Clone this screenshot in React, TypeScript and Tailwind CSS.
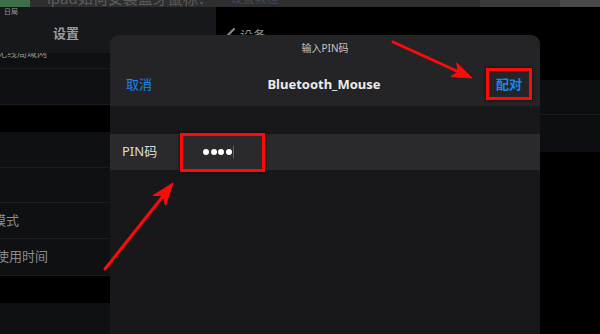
import React from 'react';

const font = { fontFamily: '"Noto Sans", "Noto Sans CJK SC", sans-serif' };

const SideRow = ({ h, label, shift }: { h: string; label?: string; shift?: string }) => (
  <div className={`${h} flex items-center border-b border-[#1b1c20] bg-[#0e1014] overflow-hidden`}>
    {label && <span className={`${shift} whitespace-nowrap text-[13px] text-[#8c8c8c]`}>{label}</span>}
  </div>
);

const Arrows = () => (
  <svg className="pointer-events-none absolute left-0 top-0" width="600" height="334" viewBox="0 0 600 334">
    <g fill="#ff0a0a" stroke="#ff0a0a" strokeLinejoin="round">
      <line x1="393" y1="42" x2="459" y2="72" strokeWidth="3" strokeLinecap="round" />
      <polygon points="472,78 451,76.5 458.3,71.8 456.7,63" strokeWidth="1" />
      <line x1="105" y1="269" x2="164" y2="195" strokeWidth="3" strokeLinecap="round" />
      <polygon points="173,183 165.6,205.4 163.1,195.6 153.2,195.4" strokeWidth="1" />
    </g>
  </svg>
);

export default function App() {
  return (
    <div className="relative flex h-[334px] w-[600px] flex-col overflow-hidden bg-black" style={font}>
      {/* page header strip, mostly cut off */}
      <div className="flex h-[7px] overflow-hidden bg-[#2e2e2e]">
        <div className="w-[30px] bg-[#3d6e48]" />
        <span className="ml-[17px] mt-[-9px] whitespace-nowrap text-[15px] leading-[15px] text-[#5c5c5c]">ipad如何安装蓝牙鼠标：</span>
        <span className="ml-[18px] mt-[-9px] whitespace-nowrap text-[12px] leading-[15px] text-[#3c4a5a]">设置教程</span>
        <div className="flex-1" />
        <div className="w-[80px] bg-[#3a3a3a]" />
        <div className="w-[40px] bg-[#4a4a4a]" />
      </div>

      <div className="flex flex-1">
        {/* settings sidebar */}
        <div className="flex w-[216px] flex-col">
          <div className="relative h-[46px] bg-[#17181c]">
            <span className="absolute left-[4px] top-[1px] text-[7px] leading-[8px] text-[#9a9a9a]">日局</span>
            <div className="pl-[53px] pt-[18px] text-[13px] font-semibold leading-[16px] text-[#9c9c9c]">设置</div>
          </div>
          <div className="flex h-[16px] items-start justify-between overflow-hidden border-b border-[#1b1c20] bg-[#0e1014] pr-[18px]">
            <span className="mt-[-7px] ml-[-3px] text-[10px] text-[#8c8c8c]">无线局域网</span>
            <span className="mt-[-7px] text-[10px] text-[#8c8c8c]">Off</span>
          </div>
          <SideRow h="h-[36px]" />
          <div className="h-[27px] bg-black" />
          <SideRow h="h-[36px]" />
          <SideRow h="h-[35px]" />
          <SideRow h="h-[36px]" label="模式" shift="ml-[-7px]" />
          <SideRow h="h-[37px]" label="使用时间" shift="ml-[-4px]" />
          <div className="h-[27px] bg-black" />
          <div className="flex-1 bg-[#0e1014]" />
        </div>

        {/* detail panel */}
        <div className="flex flex-1 flex-col bg-black">
          <div className="flex h-[46px] items-end pb-[11px] pl-[10px] text-[#8c8c8c]">
            <svg width="10" height="14" viewBox="0 0 10 14" className="mr-[4px]">
              <path d="M8 1 L2 7 L8 13" fill="none" stroke="#8c8c8c" strokeWidth="2" strokeLinecap="round" />
            </svg>
            <span className="text-[13px] leading-[14px]">设备</span>
          </div>
          <div className="h-[27px]" />
          <div className="h-[35px] border-b border-[#1a1b1f] bg-[#0c0e12]" />
          <div className="h-[37px] bg-[#0c0e12]" />
          <div className="flex-1" />
        </div>
      </div>

      {/* PIN sheet */}
      <div className="absolute left-[110px] top-[35px] flex h-[299px] w-[430px] flex-col overflow-hidden rounded-t-[9px] bg-[#18181a]">
        <div className="h-[71px] bg-[#242426]">
          <div className="pt-[6px] text-center text-[10px] leading-[14px] text-[#c6c6c6]">输入PIN码</div>
          <div className="mt-[21px] flex items-center justify-between px-[16px] text-[13px] leading-[16px]">
            <span className="text-[#1c86ee]">取消</span>
            <span className="font-bold text-[#ececec]">Bluetooth_Mouse</span>
            <span className="pr-[2px] font-semibold text-[#1c86ee]">配对</span>
          </div>
        </div>
        <div className="mt-[28px] flex h-[36px] items-center bg-[#2a2a2c]">
          <span className="w-[93px] pl-[12px] text-[13px] text-[#dcdcdc]">PIN码</span>
          <div className="flex items-center gap-[1.5px]">
            <span className="h-[6px] w-[6px] rounded-full bg-white" />
            <span className="h-[6px] w-[6px] rounded-full bg-white" />
            <span className="h-[6px] w-[6px] rounded-full bg-white" />
            <span className="h-[6px] w-[6px] rounded-full bg-white" />
          </div>
          <span className="ml-[1px] h-[12px] w-[1px] bg-[#3a5fb8]" />
        </div>
      </div>

      {/* annotations */}
      <div className="absolute left-[486px] top-[68px] h-[32px] w-[46px] border-[3px] border-[#ff0a0a] shadow-[0_0_3px_rgba(0,0,0,0.8)]" />
      <div className="absolute left-[180px] top-[133px] h-[39px] w-[85px] border-[3px] border-[#ff0a0a] shadow-[0_0_3px_rgba(0,0,0,0.8)]" />
      <Arrows />
    </div>
  );
}
